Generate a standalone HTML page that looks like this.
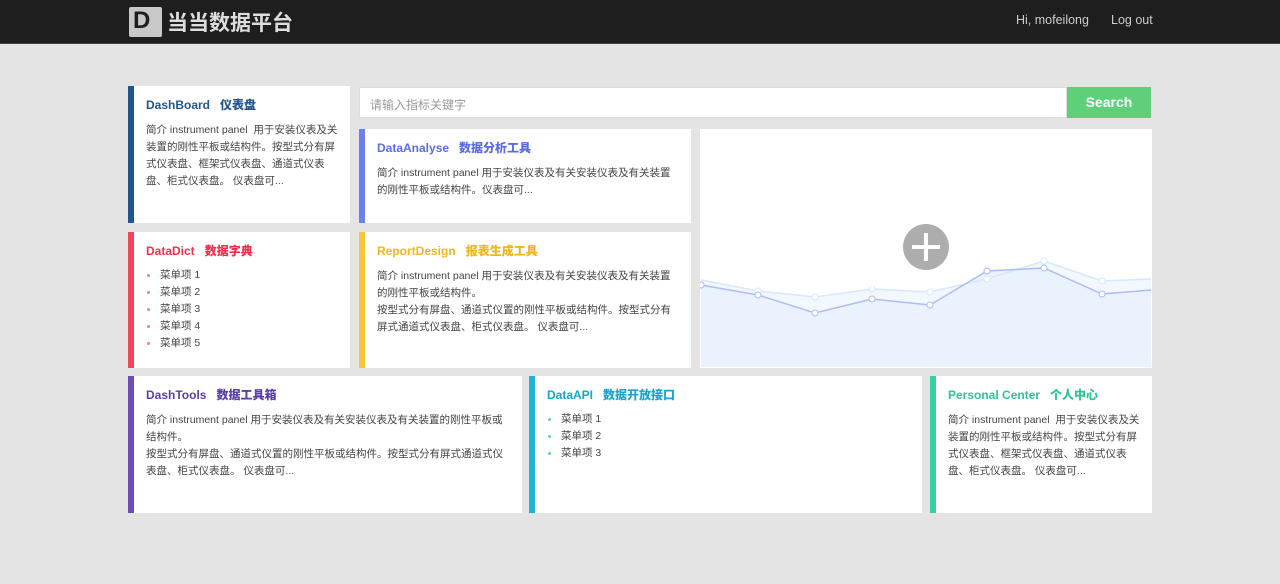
<!DOCTYPE html><html><head><meta charset="utf-8"><style>
*{margin:0;padding:0;box-sizing:border-box}
body{width:1280px;height:584px;background:#e4e4e4;font-family:"Liberation Sans","Noto Sans CJK SC",sans-serif;position:relative;overflow:hidden}
.hd{position:absolute;left:0;top:0;width:1280px;height:44px;background:#1e1e1e;border-bottom:1px solid #444}
.logo{position:absolute;left:129px;top:7px;width:33px;height:30px;background:#c8c8c8;border-radius:2px}
.logo span{position:absolute;left:4px;top:2px;width:23px;height:23px;background:#c8c8c8;color:#1e1e1e;font:bold 24px/24px "Liberation Sans",sans-serif}
.brand{position:absolute;left:167px;top:7px;color:#ddd;font-size:21px;font-weight:bold;letter-spacing:0}
.nav{position:absolute;top:13px;color:#ccc;font-size:12.5px}
.c{position:absolute;background:#fff;border-left:6px solid;padding:10px 12px 0 12px}
.t{font-size:12px;font-weight:bold;margin-top:0}
.t b{margin-left:10px}
.p{font-size:10.5px;color:#444;line-height:17px;margin-top:9px}
ul{list-style:none;margin-top:8px}
li{font-size:10.5px;color:#444;line-height:17px;padding-left:14px;position:relative}
li:before{content:"";position:absolute;left:1px;top:7px;width:3px;height:3px;border-radius:50%;background:var(--d);opacity:.7}
</style></head><body>
<div class="hd"><div class="logo"><span>D</span></div><div class="brand">当当数据平台</div>
<div class="nav" style="left:1016px">Hi, mofeilong</div><div class="nav" style="left:1111px">Log out</div></div>

<div class="c" style="left:128px;top:86px;width:222px;height:137px;border-color:#23568f"><div class="t" style="color:#23568f">DashBoard<b>仪表盘</b></div><div class="p" style="margin-top:9px">简介 instrument panel&nbsp; 用于安装仪表及关装置的刚性平板或结构件。按型式分有屏式仪表盘、框架式仪表盘、通道式仪表盘、柜式仪表盘。 仪表盘可...</div></div>

<div style="position:absolute;left:359px;top:87px;width:708px;height:31px;background:#fff;border:1px solid #ddd;font-size:12px;color:#999;padding:8px 10px">请输入指标关键字</div>
<div style="position:absolute;left:1067px;top:87px;width:84px;height:31px;background:#5dd079;color:#fff;font-weight:bold;font-size:14px;text-align:center;line-height:31px">Search</div>

<div class="c" style="left:359px;top:129px;width:332px;height:94px;border-color:#6c7ff0"><div class="t" style="color:#5b6de6">DataAnalyse<b>数据分析工具</b></div><div class="p">简介 instrument panel 用于安装仪表及有关安装仪表及有关装置的刚性平板或结构件。仪表盘可...</div></div>

<div style="position:absolute;left:700px;top:129px;width:452px;height:239px;background:#fff">
<svg width="452" height="239" style="position:absolute;left:0;top:0">
<polygon points="1,151 58,162 115,168 172,160 230,163 287,150 344,132 402,152 451,150 451,238 1,238" fill="#f3f8fe"/>
<polygon points="1,156 58,166 115,184 172,170 230,176 287,142 344,139 402,165 451,161 451,238 1,238" fill="#eaf2fd"/>
<polyline points="1,151 58,162 115,168 172,160 230,163 287,150 344,132 402,152 451,150" fill="none" stroke="#d6e8fb" stroke-width="1.5"/>
<polyline points="1,156 58,166 115,184 172,170 230,176 287,142 344,139 402,165 451,161" fill="none" stroke="#aebcf5" stroke-width="1.5"/>
<g fill="#fff" stroke="#d6e8fb"><circle cx="58" cy="162" r="3"/><circle cx="115" cy="168" r="3"/><circle cx="172" cy="160" r="3"/><circle cx="230" cy="163" r="3"/><circle cx="287" cy="150" r="3"/><circle cx="344" cy="132" r="3"/><circle cx="402" cy="152" r="3"/></g>
<g fill="#fff" stroke="#aebcf5"><circle cx="1" cy="156" r="3"/><circle cx="58" cy="166" r="3"/><circle cx="115" cy="184" r="3"/><circle cx="172" cy="170" r="3"/><circle cx="230" cy="176" r="3"/><circle cx="287" cy="142" r="3"/><circle cx="344" cy="139" r="3"/><circle cx="402" cy="165" r="3"/></g>
<circle cx="226" cy="118" r="23" fill="#adadad"/><rect x="212" y="116" width="28" height="4" fill="#fff"/><rect x="224" y="104" width="4" height="28" fill="#fff"/>
</svg></div>

<div class="c" style="left:128px;top:232px;width:222px;height:136px;border-color:#f0465c;--d:#f0465c"><div class="t" style="color:#f0304a">DataDict<b>数据字典</b></div><ul><li>菜单项 1</li><li>菜单项 2</li><li>菜单项 3</li><li>菜单项 4</li><li>菜单项 5</li></ul></div>

<div class="c" style="left:359px;top:232px;width:332px;height:136px;border-color:#f8c53c"><div class="t" style="color:#f3b51c">ReportDesign<b>报表生成工具</b></div><div class="p">简介 instrument panel 用于安装仪表及有关安装仪表及有关装置的刚性平板或结构件。<br>按型式分有屏盘、通道式仪置的刚性平板或结构件。按型式分有屏式通道式仪表盘、柜式仪表盘。 仪表盘可...</div></div>

<div class="c" style="left:128px;top:376px;width:394px;height:137px;border-color:#6a4fb5"><div class="t" style="color:#5a3fa8">DashTools<b>数据工具箱</b></div><div class="p">简介 instrument panel 用于安装仪表及有关安装仪表及有关装置的刚性平板或结构件。<br>按型式分有屏盘、通道式仪置的刚性平板或结构件。按型式分有屏式通道式仪表盘、柜式仪表盘。 仪表盘可...</div></div>

<div class="c" style="left:529px;top:376px;width:393px;height:137px;border-color:#1ab4d8;--d:#1ab4d8"><div class="t" style="color:#16a6cc">DataAPI<b>数据开放接口</b></div><ul><li>菜单项 1</li><li>菜单项 2</li><li>菜单项 3</li></ul></div>

<div class="c" style="left:930px;top:376px;width:222px;height:137px;border-color:#33d0a0"><div class="t" style="color:#2cc596">Personal Center<b>个人中心</b></div><div class="p">简介 instrument panel&nbsp; 用于安装仪表及关装置的刚性平板或结构件。按型式分有屏式仪表盘、框架式仪表盘、通道式仪表盘、柜式仪表盘。 仪表盘可...</div></div>
</body></html>
